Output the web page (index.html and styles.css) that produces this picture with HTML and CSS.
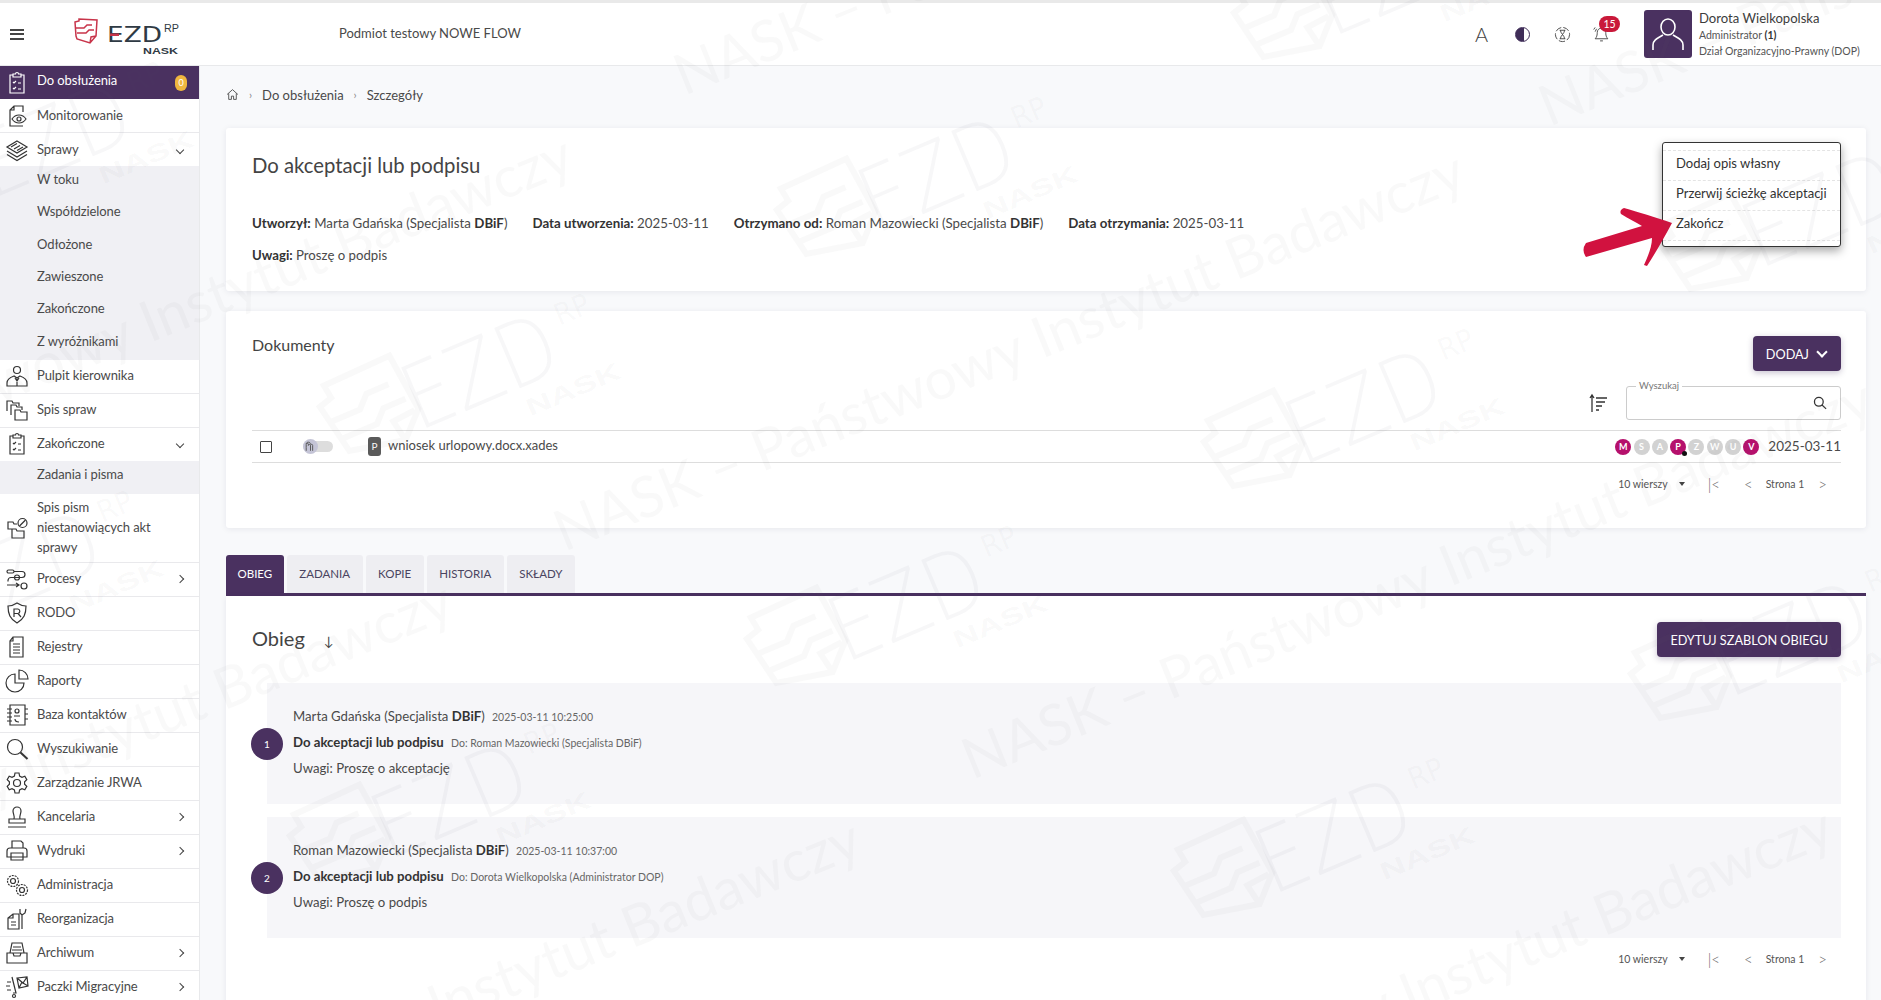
FILE: index.html
```html
<!DOCTYPE html>
<html lang="pl">
<head>
    <meta charset="utf-8">
    <title>EZD RP - Do obsłużenia</title>
    <link rel="stylesheet" href="styles.css">
</head>
<body>
    <svg class="sprite" width="0" height="0">
        <symbol id="i-task" viewBox="0 0 24 24"><path d="M8 4H5v18h14V4h-3M8 3h2.5a1.5 1.5 0 0 1 3 0H16v3H8zM8 11l1 1 2-2M8 17l1 1 2-2M13 12h3M13 18h3M8 14h0"/></symbol>
        <symbol id="i-monitor" viewBox="0 0 24 24"><path d="M18 8V2H9L5 6v16h13M9 2v4H5M7 15c2-3 4-4 7-4s5 1 7 4c-2 3-4 4-7 4s-5-1-7-4z"/><circle cx="14" cy="15" r="2"/></symbol>
        <symbol id="i-layers" viewBox="0 0 24 24"><path d="M12 3l10 6-10 6L2 9zM2 13l10 6 10-6M2 16.500l10 6 10-6M6 9l6-3.500M9 11l6-3.500M12 12.500l6-3.500"/></symbol>
        <symbol id="i-boss" viewBox="0 0 24 24"><circle cx="12" cy="6" r="3.500"/><path d="M2 22v-3c0-4 4-6 7-7l3 2 3-2c3 1 7 3 7 7v3zM12 14v8M10 14l2 3 2-3"/></symbol>
        <symbol id="i-folders" viewBox="0 0 24 24"><path d="M2 13V3h5l1 2h6v3M6 17V7h5l1 2h5v3M10 22V12h5l1 2h6v8z"/></symbol>
        <symbol id="i-nofolder" viewBox="0 0 24 24"><path d="M7 13H3V6h5l1 2h3M7 22v-9h4l1 2h7v7z"/><circle cx="17.500" cy="7" r="4.500"/><path d="M14.500 10l6-6"/></symbol>
        <symbol id="i-process" viewBox="0 0 24 24"><rect x="2" y="3" width="7" height="3" rx="1.500"/><path d="M9 4.500h8a3 3 0 0 1 0 6H6a3 3 0 0 0-3 3v1M2 18h12M11 16l3 2-3 2"/><circle cx="12" cy="10.500" r="2.500"/><circle cx="19" cy="19" r="3"/></symbol>
        <symbol id="i-rodo" viewBox="0 0 24 24"><path d="M12 2c3 2 6 3 9 3 0 8-2 13-9 17C5 18 3 13 3 5c3 0 6-1 9-3zM9 16V8h4a2.300 2.300 0 0 1 0 4.500H9M13 12.500l3 3.500"/></symbol>
        <symbol id="i-list" viewBox="0 0 24 24"><path d="M8 2h10v20H5V6zM8 2v4H5M8 9h7M8 12h7M8 15h7M8 18h7"/></symbol>
        <symbol id="i-pie" viewBox="0 0 24 24"><path d="M10 5a9 9 0 1 0 9 9h-9zM14 1v9h9a9 9 0 0 0-9-9z"/></symbol>
        <symbol id="i-contacts" viewBox="0 0 24 24"><path d="M5 2h15v20H5zM2 6h5M2 10h5M2 14h5M2 18h5M20 6h3M20 11h3M20 16h3"/><circle cx="12" cy="8" r="2"/><path d="M9 13h6M10 16c0 2 2 3 4 3"/></symbol>
        <symbol id="i-search" viewBox="0 0 24 24"><circle cx="10" cy="10" r="7.500"/><path d="M15.500 15.500l7 6.500" stroke-width="2"/></symbol>
        <symbol id="i-gear" viewBox="0 0 24 24"><path d="M10 2h4l.6 3 2.400 1.300 2.800-1 2 3.400-2.200 2 0 2.600 2.200 2-2 3.400-2.800-1-2.400 1.300-.6 3h-4l-.6-3-2.400-1.300-2.800 1-2-3.400 2.200-2v-2.600l-2.200-2 2-3.400 2.800 1L9.400 5z"/><circle cx="12" cy="12" r="3.500"/></symbol>
        <symbol id="i-stamp" viewBox="0 0 24 24"><path d="M9 14c1-3-1-5-1-8a4 4 0 0 1 8 0c0 3-2 5-1 8zM4 14h16v4H4zM3 22h18"/></symbol>
        <symbol id="i-print" viewBox="0 0 24 24"><path d="M7 9V2h9l2 2v5M2 18v-6a3 3 0 0 1 3-3h14a3 3 0 0 1 3 3v6zM6 14h12v7H6z"/></symbol>
        <symbol id="i-gears" viewBox="0 0 24 24"><circle cx="8" cy="8" r="5.500" stroke-dasharray="2 1"/><circle cx="8" cy="8" r="2.500"/><circle cx="17" cy="17" r="5.500" stroke-dasharray="2 1"/><circle cx="17" cy="17" r="2.500"/></symbol>
        <symbol id="i-reorg" viewBox="0 0 24 24"><path d="M3 22V11l5-4h6v15zM3 11h5V7M6 15h5M6 18h5M17 22V8M17 8l-2-2V2M17 8l3-2 1-4"/></symbol>
        <symbol id="i-archive" viewBox="0 0 24 24"><path d="M7 2h10l2 10H5zM8 6h8M7 9h10M2 12h6l1 3h6l1-3h6v10H2z"/></symbol>
        <symbol id="i-trolley" viewBox="0 0 24 24"><path d="M2 7h4M1 11h4M2 15h4M7 2l4 16h-3"/><circle cx="9" cy="21" r="1.500"/><path d="M12 3l10-1 1 9-9 2zM12 3l6 5 4-6M14 13l3-6M23 11l-5-3"/></symbol>
        <symbol id="i-folder-logo" viewBox="0 0 25 28"><path d="M2 5l4-1V2l18 1-1 16-6 7-13-4-1-3zM17 26l1-6 5-1M3 11h8l3-3h5M4 16h9l3-3h5"/></symbol>
        <symbol id="i-home" viewBox="0 0 24 24"><path d="M2 12l10-9 10 9M5 10v11h5v-6h4v6h5V10"/></symbol>
        <symbol id="i-hourglass" viewBox="0 0 24 24"><circle cx="12" cy="12" r="10" stroke-dasharray="9 3"/><path d="M8 6h8M8 18h8M9 6c0 4 6 8 6 12M15 6c0 4-6 8-6 12"/></symbol>
        <symbol id="i-bell" viewBox="0 0 24 24"><path d="M12 3a6 6 0 0 0-6 6c0 6-2 8-3 9h18c-1-1-3-3-3-9a6 6 0 0 0-6-6zM10 21h4M3 8l2-4M1 5l2-3"/></symbol>
        <symbol id="i-user" viewBox="0 0 48 48"><ellipse cx="24" cy="17" rx="7" ry="8"/><path d="M9 40v-5c0-5 5-7 10-10M39 40v-5c0-5-5-7-10-10"/></symbol>
        <symbol id="i-grab" viewBox="0 0 14 14"><path d="M3 8V5a1 1 0 0 1 2 0v1M5 6a1 1 0 0 1 2 0M7 6a1 1 0 0 1 2 0v5M3 8v3M7 6v5M3 4.500c0-2 4-2 4 0"/></symbol>
    </svg>

    <header class="topbar">
        <button class="burger"><span></span><span></span><span></span></button>
        <div class="logo">
            <svg class="logo-folder"><use href="#i-folder-logo"/></svg>
            <svg class="logo-word" viewBox="0 0 110 36" width="110" height="36">
                <text class="logo-ezd" x="0" y="22" textLength="55" lengthAdjust="spacingAndGlyphs">EZD</text>
                <rect x="3" y="13.500" width="9" height="2.500" fill="#c8344a"/>
                <text class="logo-rp" x="57" y="12" textLength="15" lengthAdjust="spacingAndGlyphs">RP</text>
                <text class="logo-nask" x="36" y="34" textLength="35" lengthAdjust="spacingAndGlyphs">NASK</text>
            </svg>
        </div>
        <div class="org">Podmiot testowy NOWE FLOW</div>
        <div class="top-tools">
            <span class="tool-a">A</span>
            <span class="tool-moon"></span>
            <svg class="tool-ico"><use href="#i-hourglass"/></svg>
            <span class="tool-bell">
                <svg class="tool-ico"><use href="#i-bell"/></svg>
                <b class="bell-count">15</b>
            </span>
        </div>
        <div class="account">
            <div class="avatar"><svg><use href="#i-user"/></svg></div>
            <div class="account-text">
                <div class="account-name">Dorota Wielkopolska</div>
                <div class="account-sub">Administrator <b>(1)</b></div>
                <div class="account-sub">Dział Organizacyjno-Prawny (DOP)</div>
            </div>
        </div>
    </header>

    <div class="app">
        <nav class="sidebar">
            <a class="nav-item active"><svg class="ico"><use href="#i-task"/></svg><span>Do obsłużenia</span><i class="nav-badge">0</i></a>
            <a class="nav-item"><svg class="ico"><use href="#i-monitor"/></svg><span>Monitorowanie</span></a>
            <a class="nav-item open"><svg class="ico"><use href="#i-layers"/></svg><span>Sprawy</span><i class="chev down"></i></a>
            <a class="nav-sub">W toku</a>
            <a class="nav-sub">Współdzielone</a>
            <a class="nav-sub">Odłożone</a>
            <a class="nav-sub">Zawieszone</a>
            <a class="nav-sub">Zakończone</a>
            <a class="nav-sub">Z wyróżnikami</a>
            <a class="nav-item"><svg class="ico"><use href="#i-boss"/></svg><span>Pulpit kierownika</span></a>
            <a class="nav-item"><svg class="ico"><use href="#i-folders"/></svg><span>Spis spraw</span></a>
            <a class="nav-item open"><svg class="ico"><use href="#i-task"/></svg><span>Zakończone</span><i class="chev down"></i></a>
            <a class="nav-sub">Zadania i pisma</a>
            <a class="nav-item tall"><svg class="ico"><use href="#i-nofolder"/></svg><span>Spis pism niestanowiących akt sprawy</span></a>
            <a class="nav-item"><svg class="ico"><use href="#i-process"/></svg><span>Procesy</span><i class="chev"></i></a>
            <a class="nav-item"><svg class="ico"><use href="#i-rodo"/></svg><span>RODO</span></a>
            <a class="nav-item"><svg class="ico"><use href="#i-list"/></svg><span>Rejestry</span></a>
            <a class="nav-item"><svg class="ico"><use href="#i-pie"/></svg><span>Raporty</span></a>
            <a class="nav-item"><svg class="ico"><use href="#i-contacts"/></svg><span>Baza kontaktów</span></a>
            <a class="nav-item"><svg class="ico"><use href="#i-search"/></svg><span>Wyszukiwanie</span></a>
            <a class="nav-item"><svg class="ico"><use href="#i-gear"/></svg><span>Zarządzanie JRWA</span></a>
            <a class="nav-item"><svg class="ico"><use href="#i-stamp"/></svg><span>Kancelaria</span><i class="chev"></i></a>
            <a class="nav-item"><svg class="ico"><use href="#i-print"/></svg><span>Wydruki</span><i class="chev"></i></a>
            <a class="nav-item"><svg class="ico"><use href="#i-gears"/></svg><span>Administracja</span></a>
            <a class="nav-item"><svg class="ico"><use href="#i-reorg"/></svg><span>Reorganizacja</span></a>
            <a class="nav-item"><svg class="ico"><use href="#i-archive"/></svg><span>Archiwum</span><i class="chev"></i></a>
            <a class="nav-item"><svg class="ico"><use href="#i-trolley"/></svg><span>Paczki Migracyjne</span><i class="chev"></i></a>
        </nav>

        <main class="content">
            <div class="crumbs">
                <svg class="crumb-home"><use href="#i-home"/></svg>
                <span class="crumb-sep">›</span>
                <span>Do obsłużenia</span>
                <span class="crumb-sep">›</span>
                <span>Szczegóły</span>
            </div>

            <section class="card card-head">
                <h2 class="card-title">Do akceptacji lub podpisu</h2>
                <div class="meta">
                    <span><b>Utworzył:</b> Marta Gdańska (Specjalista <b>DBiF</b>)</span>
                    <span><b>Data utworzenia:</b> 2025-03-11</span>
                    <span><b>Otrzymano od:</b> Roman Mazowiecki (Specjalista <b>DBiF</b>)</span>
                    <span><b>Data otrzymania:</b> 2025-03-11</span>
                </div>
                <div class="meta-note"><b>Uwagi:</b> Proszę o podpis</div>
                <div class="popup">
                    <a>Dodaj opis własny</a>
                    <a>Przerwij ścieżkę akceptacji</a>
                    <a>Zakończ</a>
                </div>
            </section>

            <section class="card card-docs">
                <div class="row-between">
                    <h3 class="docs-title">Dokumenty</h3>
                    <button class="btn">DODAJ <i class="chev-btn"></i></button>
                </div>
                <div class="doc-tools">
                    <svg class="sort-ico" viewBox="0 0 20 20" width="20" height="20"><path d="M4 19V2M2 5l2-3 2 3M8 5h11M8 9h9M8 13h6M8 17h3"/></svg>
                    <div class="search">
                        <label>Wyszukaj</label>
                        <svg><use href="#i-search"/></svg>
                    </div>
                </div>
                <div class="doc-row">
                    <span class="check"></span>
                    <span class="toggle"><span class="toggle-thumb"><svg><use href="#i-grab"/></svg></span></span>
                    <span class="doc-type">P</span>
                    <span class="doc-name">wniosek urlopowy.docx.xades</span>
                    <span class="dots">
                        <i class="dot on">M</i><i class="dot">S</i><i class="dot">A</i><i class="dot on marked">P</i><i class="dot">Z</i><i class="dot">W</i><i class="dot">U</i><i class="dot on">V</i>
                    </span>
                    <span class="doc-date">2025-03-11</span>
                </div>
                <div class="pager">
                    <span>10 wierszy</span><i class="caret"></i>
                    <span class="pg-first">|&lt;</span>
                    <span class="pg-prev">&lt;</span>
                    <span>Strona 1</span>
                    <span class="pg-next">&gt;</span>
                </div>
            </section>

            <div class="tabs">
                <a class="tab tab-on">OBIEG</a>
                <a class="tab">ZADANIA</a>
                <a class="tab">KOPIE</a>
                <a class="tab">HISTORIA</a>
                <a class="tab">SKŁADY</a>
            </div>

            <section class="card card-flow">
                <div class="row-between">
                    <h3 class="flow-title">Obieg <span class="flow-arrow">↓</span></h3>
                    <button class="btn">EDYTUJ SZABLON OBIEGU</button>
                </div>
                <div class="step step-first">
                    <div class="step-num">1</div>
                    <div class="step-body">
                        <div>Marta Gdańska (Specjalista <b>DBiF</b>) <small>2025-03-11 10:25:00</small></div>
                        <div><b>Do akceptacji lub podpisu</b> <small>Do: Roman Mazowiecki (Specjalista DBiF)</small></div>
                        <div>Uwagi: Proszę o akceptację</div>
                    </div>
                </div>
                <div class="step">
                    <div class="step-num">2</div>
                    <div class="step-body">
                        <div>Roman Mazowiecki (Specjalista <b>DBiF</b>) <small>2025-03-11 10:37:00</small></div>
                        <div><b>Do akceptacji lub podpisu</b> <small>Do: Dorota Wielkopolska (Administrator DOP)</small></div>
                        <div>Uwagi: Proszę o podpis</div>
                    </div>
                </div>
                <div class="pager pager-flow">
                    <span>10 wierszy</span><i class="caret"></i>
                    <span class="pg-first">|&lt;</span>
                    <span class="pg-prev">&lt;</span>
                    <span>Strona 1</span>
                    <span class="pg-next">&gt;</span>
                </div>
            </section>
        </main>
    </div>

    <svg class="arrow" viewBox="0 0 1881 1000" width="1881" height="1000">
        <path d="M1672 223C1655 217 1638 212 1624 208Q1619 210 1621 214C1629 219 1636 222 1642 226L1586 243Q1581 250 1586 257L1652 238C1652 247 1648 256 1644 265L1647 266C1656 252 1664 238 1672 223Z"/>
    </svg>

    <svg class="watermark" viewBox="0 0 1881 1000" width="1881" height="1000">
        <defs>
            <g id="wm-logo">
                <path class="wm-line" transform="translate(-30 23)" d="M0 0l-10-52 14-4-2-14 72-2 6 60-24 24zM56 12l-4-22 24-2M-4-34h30l12-12h24M0-14h36l12-12h24"/>
                <text class="wm-ezd" x="41" y="32" textLength="160" lengthAdjust="spacingAndGlyphs">EZD</text>
                <text class="wm-rp" x="212" y="-10" textLength="36" lengthAdjust="spacingAndGlyphs">RP</text>
                <text class="wm-nask" x="150" y="62" textLength="100" lengthAdjust="spacingAndGlyphs">NASK</text>
            </g>
        </defs>
        <use href="#wm-logo" transform="translate(825 221) rotate(-23)"/>
        <use href="#wm-logo" transform="translate(1282 24) rotate(-23)"/>
        <use href="#wm-logo" transform="translate(368 418) rotate(-23)"/>
        <use href="#wm-logo" transform="translate(1252 453) rotate(-23)"/>
        <use href="#wm-logo" transform="translate(795 650) rotate(-23)"/>
        <use href="#wm-logo" transform="translate(1709 256) rotate(-23)"/>
        <use href="#wm-logo" transform="translate(338 847) rotate(-23)"/>
        <use href="#wm-logo" transform="translate(1222 882) rotate(-23)"/>
        <use href="#wm-logo" transform="translate(-59 186) rotate(-23)"/>
        <use href="#wm-logo" transform="translate(-89 615) rotate(-23)"/>
        <use href="#wm-logo" transform="translate(1679 685) rotate(-23)"/>
        <text class="wm-text" transform="translate(564 552) rotate(-22)">NASK – Państwowy Instytut Badawczy</text>
        <text class="wm-text" transform="translate(-328 536) rotate(-22)">NASK – Państwowy Instytut Badawczy</text>
        <text class="wm-text" transform="translate(972 780) rotate(-22)">NASK – Państwowy Instytut Badawczy</text>
        <text class="wm-text" transform="translate(684 96) rotate(-22)">NASK – Państwowy Instytut Badawczy</text>
        <text class="wm-text" transform="translate(-40 1220) rotate(-22)">NASK – Państwowy Instytut Badawczy</text>
        <text class="wm-text" transform="translate(932 1208) rotate(-22)">NASK – Państwowy Instytut Badawczy</text>
        <text class="wm-text" transform="translate(1549 127) rotate(-22)">NASK – Państwowy Instytut Badawczy</text>
        <text class="wm-text" transform="translate(-448 982) rotate(-22)">NASK – Państwowy Instytut Badawczy</text>
    </svg>
</body>
</html>
```

FILE: styles.css
```css
* { box-sizing: border-box; }
html, body { margin: 0; height: 1000px; overflow: hidden; }
body { font-family: Lato, "Open Sans", sans-serif; font-size: 13.2px; color: #4a4a4a; background: #f8f9fb; position: relative; }
a { display: block; }
b { font-weight: 700; color: #333; }
h2, h3 { margin: 0; font-weight: 400; color: #333; }
.sprite { position: absolute; }
symbol { overflow: visible; }

/* top bar */
.topbar { height: 66px; border-top: 3px solid #e9e9e9; border-bottom: 1px solid #e8e9eb; background: #fff; display: flex; align-items: center; }
.burger { width: 14px; height: 11px; margin-left: 10px; padding: 0; border: 0; background: none; display: flex; flex-direction: column; justify-content: space-between; }
.burger span { display: block; height: 2px; background: #444; }
.logo { margin-left: 49px; width: 266px; flex: none; display: flex; align-items: flex-start; height: 36px; margin-top: 2px; }
.logo-folder { width: 25px; height: 28px; flex: none; fill: none; stroke: #c8344a; stroke-width: 1.5; }
.logo-word { margin-left: 9px; margin-top: 3px; flex: none; overflow: visible; }
.logo-ezd { font: 400 22px "DejaVu Sans", sans-serif; fill: #2f3a44; }
.logo-rp { font: 400 10px "Liberation Sans", sans-serif; fill: #2f3a44; }
.logo-nask { font: 700 9px "Liberation Sans", sans-serif; fill: #2f3a44; }
.org { font-size: 13px; color: #4a4a4a; margin-top: -2px; }
.top-tools { margin-left: auto; display: flex; align-items: center; gap: 24px; color: #444; }
.tool-a { font-size: 20px; font-weight: 300; width: 14px; margin-right: 2px; }
.tool-moon { width: 15px; height: 15px; border-radius: 50%; border: 1.5px solid #3f2d58; background: linear-gradient(90deg, #3f2d58 62%, #fff 62%); }
.tool-ico { width: 17px; height: 17px; fill: none; stroke: #444; stroke-width: 1.3; display: block; }
.tool-bell { position: relative; display: block; margin-left: -2px; }
.bell-count { position: absolute; left: 6px; top: -10px; width: 21px; height: 16px; border-radius: 8px; background: #c9193a; color: #fff; font-size: 10.5px; font-weight: 400; text-align: center; line-height: 16px; }
.account { display: flex; margin-left: 34px; margin-right: 21px; gap: 7px; align-items: center; }
.avatar { width: 48px; height: 48px; border-radius: 3px; background: #4a3160; }
.avatar svg { width: 48px; height: 48px; fill: none; stroke: #fff; stroke-width: 1.6; display: block; }
.account-text { width: 161px; }
.account-name { font-size: 13.1px; line-height: 18px; color: #3c3c3c; }
.account-sub { font-size: 10.5px; line-height: 16px; color: #555; white-space: nowrap; }

/* sidebar */
.app { display: flex; height: 934px; }
.sidebar { width: 200px; flex: none; background: #fff; border-right: 1px solid #e8e9eb; overflow: hidden; }
.nav-item { display: flex; align-items: center; min-height: 34px; padding-left: 4px; padding-right: 14px; border-bottom: 1px solid #e9e9ec; font-size: 13px; letter-spacing: -.1px; color: #4a4a4a; }
.nav-item span { flex: 1; margin-left: 7px; margin-bottom: 2px; line-height: 20px; }
.nav-item.active { background: #4a3160; color: #fff; min-height: 33px; border-bottom: 0; }
.nav-item.active span { margin-bottom: 5px; }
.nav-item.active .ico { stroke: #fff; }
.nav-item.open { min-height: 33px; border-bottom: 0; }
.nav-item.tall { min-height: 69px; }
.ico { width: 26px; height: 24px; flex: none; fill: none; stroke: #333; stroke-width: 1.2; }
.nav-badge { width: 12px; height: 16px; border-radius: 6px; background: #f0b73f; color: #fff; font-size: 9px; font-style: normal; text-align: center; line-height: 16px; margin-right: -2px; letter-spacing: 0; }
.nav-sub { height: 32.33px; line-height: 27px; padding-left: 37px; background: #f0f0f4; font-size: 13px; letter-spacing: -.1px; color: #4a4a4a; }
.nav-sub:has(+ .nav-item.tall) { height: 33px; }
.chev { width: 6px; height: 6px; border-right: 1.5px solid #444; border-top: 1.5px solid #444; transform: rotate(45deg); margin-right: 2px; }
.chev.down { transform: rotate(135deg); }

/* main */
.content { flex: 1; padding: 0 15px 0 26px; min-width: 0; }
.crumbs { height: 62px; display: flex; align-items: center; gap: 10px; font-size: 13px; color: #4a4a4a; padding-bottom: 5px; }
.crumb-home { width: 13px; height: 13px; fill: none; stroke: #444; stroke-width: 1.6; }
.crumb-sep { color: #888; font-size: 11px; }
.card { background: #fff; border-radius: 3px; box-shadow: 0 1px 6px rgba(30, 30, 60, .08); position: relative; }
.card-head { height: 163px; padding: 23px 26px 0; }
.card-title { font-size: 20.300px; line-height: 28px; color: #444; }
.meta { display: flex; gap: 25px; margin-top: 34px; line-height: 20px; font-size: 13.300px; }
.meta-note { margin-top: 12px; line-height: 20px; }
.popup { position: absolute; top: 14px; right: 25px; width: 179px; height: 105px; padding: 7px 0 0; background: #fff; border: 1px solid #333; border-radius: 3px; box-shadow: 0 4px 10px rgba(0, 0, 0, .35); z-index: 5; }
.popup a { height: 30px; line-height: 24px; padding-left: 13px; font-size: 13.050px; color: #333; border-top: 1px dashed #e4e4e4; white-space: nowrap; }
.popup a:last-child { border-bottom: 1px dashed #e4e4e4; height: 31px; }
.card-docs { height: 217px; margin-top: 20px; padding: 25px 25px 0 26px; }
.row-between { display: flex; justify-content: space-between; align-items: center; }
.docs-title { font-size: 16px; line-height: 16px; margin-bottom: 18px; color: #444; }
.btn { height: 35px; padding: 0 13px; border: 0; border-radius: 4px; background: #4a3160; color: #fff; font: 400 12.700px Lato, sans-serif; box-shadow: 0 2px 6px rgba(40, 20, 70, .25); display: flex; align-items: center; gap: 9px; }
.chev-btn { width: 8px; height: 8px; border-right: 2px solid #fff; border-bottom: 2px solid #fff; transform: rotate(45deg); margin: -4px 2px 0 0; }
.doc-tools { display: flex; justify-content: flex-end; align-items: center; margin-top: 15px; gap: 18px; }
.sort-ico { fill: none; stroke: #333; stroke-width: 1.3; }
.search { position: relative; width: 215px; height: 34px; border: 1px solid #ccc; border-radius: 3px; }
.search label { position: absolute; left: 9px; top: -7px; padding: 0 3px; background: #fff; font-size: 9.500px; line-height: 12px; color: #777; }
.search svg { position: absolute; right: 13px; top: 9px; width: 14px; height: 14px; fill: none; stroke: #333; stroke-width: 2.2; }
.doc-row { display: flex; align-items: center; height: 33px; margin-top: 10px; border-top: 1px solid #ddd; border-bottom: 1px solid #ddd; }
.check { width: 12px; height: 12px; margin-left: 8px; border: 1.5px solid #444; border-radius: 1px; }
.toggle { width: 30px; height: 11px; margin-left: 31px; background: #ddd; border-radius: 6px; display: flex; align-items: center; }
.toggle-thumb { width: 15px; height: 15px; flex: none; border-radius: 50%; background: #c4c4d6; }
.toggle-thumb svg { width: 15px; height: 15px; fill: none; stroke: #555; stroke-width: .9; display: block; }
.doc-type { width: 13px; height: 19px; margin-left: 35px; background: #5a5a5a; color: #fff; border-radius: 3px; font-size: 10px; line-height: 19px; text-align: center; }
.doc-name { margin-left: 7px; font-size: 13px; color: #4a4a4a; flex: 1; margin-top: -3px; }
.dots { display: flex; gap: 2.300px; margin-right: 9px; }
.dot { width: 16px; height: 16px; border-radius: 50%; background: #d2d2d2; color: #fff; font-size: 9px; font-weight: 700; font-style: normal; text-align: center; line-height: 16px; position: relative; }
.dot.on { background: #b5106c; }
.dot.marked::after { content: ""; position: absolute; right: -1px; bottom: -1px; width: 5px; height: 5px; border-radius: 50%; background: #111; }
.doc-date { font-size: 13.500px; color: #4a4a4a; margin-top: -2px; }
.pager { display: flex; justify-content: flex-end; align-items: center; height: 41px; font-size: 10.500px; color: #555; padding-right: 14px; }
.caret { width: 0; height: 0; margin-left: 11px; border: 3.500px solid transparent; border-top: 4px solid #444; border-bottom: 0; }
.pg-first { margin-left: 23px; font-size: 15px; font-weight: 300; color: #666; }
.pg-prev { margin: 0 13px 0 24px; font-size: 15px; font-weight: 300; color: #666; }
.pg-next { margin-left: 14px; font-size: 15px; font-weight: 300; color: #666; }

/* tabs */
.tabs { display: flex; margin-top: 27px; gap: 3px; height: 41px; border-bottom: 3px solid #4a3160; }
.tab { height: 38px; line-height: 38px; padding: 0 12.500px; background: #eeeef2; font-size: 11.500px; color: #4a4460; border-radius: 3px 3px 0 0; text-align: center; }
.tab-on { background: #4a3160; color: #fff; padding: 0 11.500px; }
.card-flow { height: 420px; margin-top: 0; padding: 26px 25px 0 26px; border-radius: 0; }
.flow-title { font-size: 20px; line-height: 28px; color: #444; }
.flow-arrow { font-size: 13px; margin-left: 14px; color: #444; }
.step { display: flex; align-items: center; margin-top: 13px; margin-left: -1px; }
.step-first { margin-top: 26px; }
.step-num { width: 32px; height: 32px; flex: none; margin-right: -16px; border-radius: 50%; background: #4a3160; color: #fff; font-size: 10px; line-height: 32px; text-align: center; z-index: 1; }
.step-body { flex: 1; height: 121px; padding: 23px 0 0 26px; background: #f6f6f9; line-height: 20px; }
.step-body div + div { margin-top: 5px; }
.step-body small { font-size: 10.500px; color: #666; margin-left: 4px; }
.pager-flow { margin-top: 0; height: 42px; }

/* overlays */
.arrow { position: absolute; left: 0; top: 0; pointer-events: none; z-index: 6; }
.arrow path { fill: #d1123f; }
.watermark { position: absolute; left: 0; top: 0; pointer-events: none; z-index: 7; }
.wm-text { font: 400 57px Lato, sans-serif; fill: rgba(100, 100, 110, .04); }
.wm-line { fill: none; stroke: rgba(100, 100, 110, .04); stroke-width: 6; }
.wm-ezd { font: 200 90px "DejaVu Sans", sans-serif; fill: rgba(100, 100, 110, .05); }
.wm-rp { font: 400 30px "DejaVu Sans", sans-serif; fill: rgba(100, 100, 110, .04); }
.wm-nask { font: 700 24px "Liberation Sans", sans-serif; fill: rgba(100, 100, 110, .05); }
```
